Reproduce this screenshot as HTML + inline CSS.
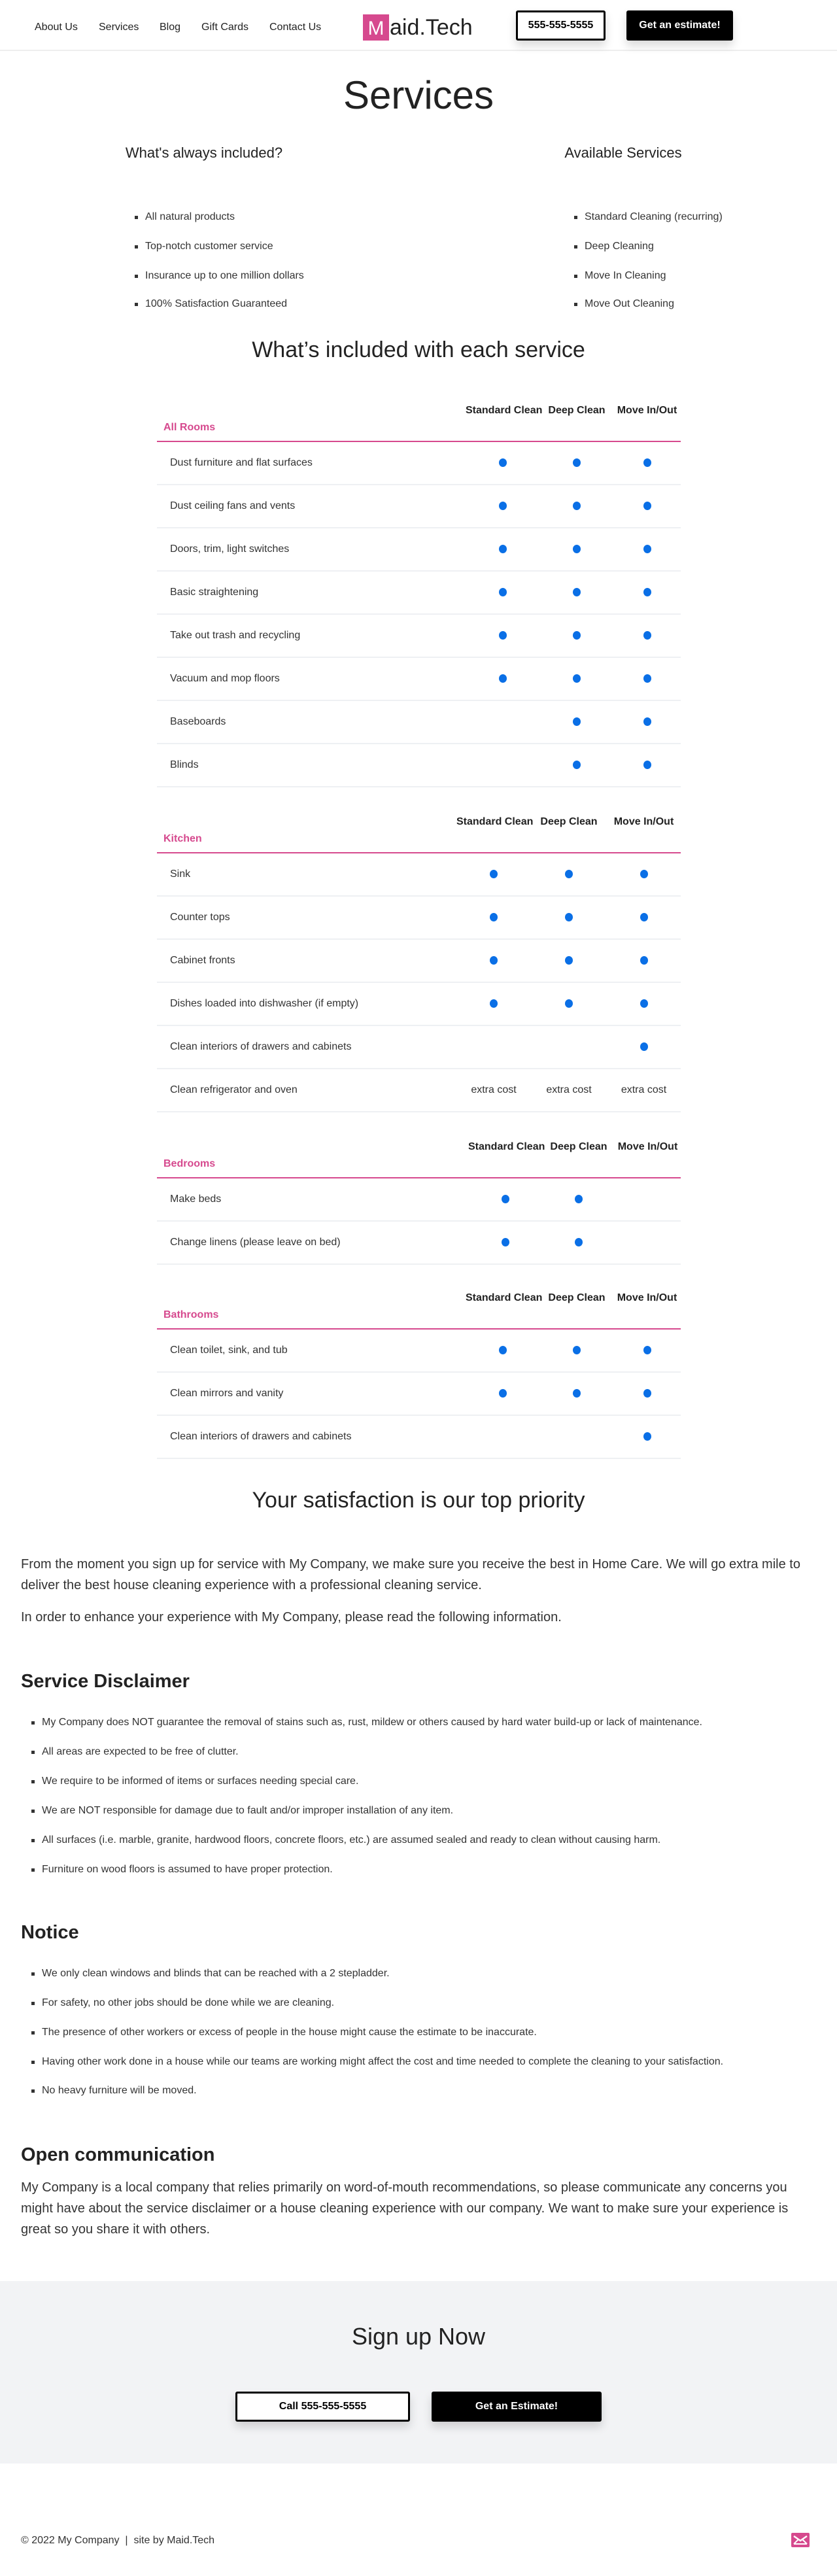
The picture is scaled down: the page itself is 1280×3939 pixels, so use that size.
<!DOCTYPE html>
<html><head><meta charset="utf-8"><style>
*{box-sizing:border-box;margin:0;padding:0}
body{width:1280px;height:3939px;position:relative;font-family:"Liberation Sans",Arial,sans-serif;color:#222;background:#fff;overflow:hidden}
.a{position:absolute}
.nav a{position:absolute;top:32px;font-size:16px;color:#222;text-decoration:none;line-height:20px}
.hdr{position:absolute;left:0;top:0;width:1280px;height:78px;border-bottom:2px solid #eee}
.btn{position:absolute;display:flex;align-items:center;justify-content:center;font-weight:bold;font-size:16px;border-radius:3px;box-shadow:0 8px 14px rgba(0,0,0,.15)}
.bw{background:#fff;border:3px solid #000;color:#000}
.bb{background:#000;color:#fff}
.ctr{position:absolute;left:0;width:1280px;text-align:center}
ul.l{position:absolute;list-style:none}
ul.l li{position:absolute;white-space:nowrap;font-size:16px;color:#333;line-height:20px;padding-left:16px}
ul.l li:before{content:"";position:absolute;left:0;top:8px;width:5px;height:5px;background:#333}
.tbl{position:absolute;left:240px;width:801px}
.th{position:relative;height:60px;border-bottom:2px solid #d6498e}
.th .c{position:absolute;top:0;line-height:24px;font-weight:bold;font-size:16px;color:#222;text-align:center;white-space:nowrap}
.th .cat{position:absolute;left:10px;top:26px;line-height:24px;font-size:16px;font-weight:bold;color:#d6498e}
.r{display:grid;height:66px;border-bottom:2px solid #eef0f3;align-items:center;font-size:16px;color:#333}
.r>div:first-child{padding-left:20px}
.r>div{text-align:center}
.r>div:first-child{text-align:left}
.d{display:inline-block;width:12px;height:13px;border-radius:50%;background:#0a6fe6;vertical-align:middle}
.p{position:absolute;left:32px;width:1220px;font-size:20px;line-height:32px;color:#333}
h3{position:absolute;left:32px;font-size:29px;font-weight:bold;color:#222;line-height:36px}
</style></head><body>
<div class="hdr"></div>
<div class="nav">
<a style="left:53px">About Us</a><a style="left:151px">Services</a><a style="left:244px">Blog</a><a style="left:308px">Gift Cards</a><a style="left:412px">Contact Us</a>
</div>
<div class="a" style="left:555px;top:22px;width:40px;height:40px;background:#d6498e;color:#fff;font-size:30px;line-height:44px;text-align:center">M</div>
<div class="a" style="left:596px;top:20px;font-size:34px;line-height:44px;color:#222">aid.Tech</div>
<div class="btn bw" style="left:789px;top:16px;width:137px;height:46px">555-555-5555</div>
<div class="btn bb" style="left:958px;top:16px;width:163px;height:46px">Get an estimate!</div>

<div class="ctr" style="top:110px;font-size:60px;line-height:72px">Services</div>
<div class="a" style="left:0;width:624px;text-align:center;top:220px;font-size:22px;line-height:28px">What's always included?</div>
<div class="a" style="left:640px;width:626px;text-align:center;top:220px;font-size:22px;line-height:28px">Available Services</div>
<ul class="l" style="left:206px;top:0">
<li style="top:322px">All natural products</li>
<li style="top:367px">Top-notch customer service</li>
<li style="top:412px">Insurance up to one million dollars</li>
<li style="top:455px">100% Satisfaction Guaranteed</li>
</ul>
<ul class="l" style="left:878px;top:0">
<li style="top:322px">Standard Cleaning (recurring)</li>
<li style="top:367px">Deep Cleaning</li>
<li style="top:412px">Move In Cleaning</li>
<li style="top:455px">Move Out Cleaning</li>
</ul>
<div class="ctr" style="top:513px;font-size:34px;line-height:44px">What’s included with each service</div>

<!-- T1 -->
<div class="tbl" style="top:616px">
<div class="th"><span class="c" style="left:472px;width:114px">Standard Clean</span><span class="c" style="left:586px;width:112px">Deep Clean</span><span class="c" style="left:698px;width:103px">Move In/Out</span><span class="cat">All Rooms</span></div>
<div class="r" style="grid-template-columns:472px 114px 112px 103px"><div>Dust furniture and flat surfaces</div><div><i class="d"></i></div><div><i class="d"></i></div><div><i class="d"></i></div></div>
<div class="r" style="grid-template-columns:472px 114px 112px 103px"><div>Dust ceiling fans and vents</div><div><i class="d"></i></div><div><i class="d"></i></div><div><i class="d"></i></div></div>
<div class="r" style="grid-template-columns:472px 114px 112px 103px"><div>Doors, trim, light switches</div><div><i class="d"></i></div><div><i class="d"></i></div><div><i class="d"></i></div></div>
<div class="r" style="grid-template-columns:472px 114px 112px 103px"><div>Basic straightening</div><div><i class="d"></i></div><div><i class="d"></i></div><div><i class="d"></i></div></div>
<div class="r" style="grid-template-columns:472px 114px 112px 103px"><div>Take out trash and recycling</div><div><i class="d"></i></div><div><i class="d"></i></div><div><i class="d"></i></div></div>
<div class="r" style="grid-template-columns:472px 114px 112px 103px"><div>Vacuum and mop floors</div><div><i class="d"></i></div><div><i class="d"></i></div><div><i class="d"></i></div></div>
<div class="r" style="grid-template-columns:472px 114px 112px 103px"><div>Baseboards</div><div></div><div><i class="d"></i></div><div><i class="d"></i></div></div>
<div class="r" style="grid-template-columns:472px 114px 112px 103px"><div>Blinds</div><div></div><div><i class="d"></i></div><div><i class="d"></i></div></div>
</div>

<!-- T2 -->
<div class="tbl" style="top:1245px">
<div class="th"><span class="c" style="left:458px;width:114px">Standard Clean</span><span class="c" style="left:572px;width:116px">Deep Clean</span><span class="c" style="left:688px;width:113px">Move In/Out</span><span class="cat">Kitchen</span></div>
<div class="r" style="grid-template-columns:458px 114px 116px 113px"><div>Sink</div><div><i class="d"></i></div><div><i class="d"></i></div><div><i class="d"></i></div></div>
<div class="r" style="grid-template-columns:458px 114px 116px 113px"><div>Counter tops</div><div><i class="d"></i></div><div><i class="d"></i></div><div><i class="d"></i></div></div>
<div class="r" style="grid-template-columns:458px 114px 116px 113px"><div>Cabinet fronts</div><div><i class="d"></i></div><div><i class="d"></i></div><div><i class="d"></i></div></div>
<div class="r" style="grid-template-columns:458px 114px 116px 113px"><div>Dishes loaded into dishwasher (if empty)</div><div><i class="d"></i></div><div><i class="d"></i></div><div><i class="d"></i></div></div>
<div class="r" style="grid-template-columns:458px 114px 116px 113px"><div>Clean interiors of drawers and cabinets</div><div></div><div></div><div><i class="d"></i></div></div>
<div class="r" style="grid-template-columns:458px 114px 116px 113px"><div>Clean refrigerator and oven</div><div>extra cost</div><div>extra cost</div><div>extra cost</div></div>
</div>

<!-- T3 -->
<div class="tbl" style="top:1742px">
<div class="th"><span class="c" style="left:476px;width:114px">Standard Clean</span><span class="c" style="left:590px;width:110px">Deep Clean</span><span class="c" style="left:700px;width:101px">Move In/Out</span><span class="cat">Bedrooms</span></div>
<div class="r" style="grid-template-columns:476px 114px 110px 101px"><div>Make beds</div><div><i class="d"></i></div><div><i class="d"></i></div><div></div></div>
<div class="r" style="grid-template-columns:476px 114px 110px 101px"><div>Change linens (please leave on bed)</div><div><i class="d"></i></div><div><i class="d"></i></div><div></div></div>
</div>

<!-- T4 -->
<div class="tbl" style="top:1973px">
<div class="th"><span class="c" style="left:472px;width:114px">Standard Clean</span><span class="c" style="left:586px;width:112px">Deep Clean</span><span class="c" style="left:698px;width:103px">Move In/Out</span><span class="cat">Bathrooms</span></div>
<div class="r" style="grid-template-columns:472px 114px 112px 103px"><div>Clean toilet, sink, and tub</div><div><i class="d"></i></div><div><i class="d"></i></div><div><i class="d"></i></div></div>
<div class="r" style="grid-template-columns:472px 114px 112px 103px"><div>Clean mirrors and vanity</div><div><i class="d"></i></div><div><i class="d"></i></div><div><i class="d"></i></div></div>
<div class="r" style="grid-template-columns:472px 114px 112px 103px"><div>Clean interiors of drawers and cabinets</div><div></div><div></div><div><i class="d"></i></div></div>
</div>

<div class="ctr" style="top:2272px;font-size:34px;line-height:44px">Your satisfaction is our top priority</div>
<div class="p" style="top:2376px">From the moment you sign up for service with My Company, we make sure you receive the best in Home Care. We will go extra mile to deliver the best house cleaning experience with a professional cleaning service.</div>
<div class="p" style="top:2457px">In order to enhance your experience with My Company, please read the following information.</div>

<h3 style="top:2553px">Service Disclaimer</h3>
<ul class="l" style="left:48px;top:0">
<li style="top:2624px">My Company does NOT guarantee the removal of stains such as, rust, mildew or others caused by hard water build-up or lack of maintenance.</li>
<li style="top:2669px">All areas are expected to be free of clutter.</li>
<li style="top:2714px">We require to be informed of items or surfaces needing special care.</li>
<li style="top:2759px">We are NOT responsible for damage due to fault and/or improper installation of any item.</li>
<li style="top:2804px">All surfaces (i.e. marble, granite, hardwood floors, concrete floors, etc.) are assumed sealed and ready to clean without causing harm.</li>
<li style="top:2849px">Furniture on wood floors is assumed to have proper protection.</li>
</ul>

<h3 style="top:2937px">Notice</h3>
<ul class="l" style="left:48px;top:0">
<li style="top:3008px">We only clean windows and blinds that can be reached with a 2 stepladder.</li>
<li style="top:3053px">For safety, no other jobs should be done while we are cleaning.</li>
<li style="top:3098px">The presence of other workers or excess of people in the house might cause the estimate to be inaccurate.</li>
<li style="top:3143px">Having other work done in a house while our teams are working might affect the cost and time needed to complete the cleaning to your satisfaction.</li>
<li style="top:3187px">No heavy furniture will be moved.</li>
</ul>

<h3 style="top:3277px">Open communication</h3>
<div class="p" style="top:3329px;width:1200px">My Company is a local company that relies primarily on word-of-mouth recommendations, so please communicate any concerns you might have about the service disclaimer or a house cleaning experience with our company. We want to make sure your experience is great so you share it with others.</div>

<div class="a" style="left:0;top:3488px;width:1280px;height:279px;background:#f2f3f5"></div>
<div class="ctr" style="top:3551px;font-size:36px;line-height:44px">Sign up Now</div>
<div class="btn bw" style="left:360px;top:3657px;width:267px;height:46px">Call 555-555-5555</div>
<div class="btn bb" style="left:660px;top:3657px;width:260px;height:46px">Get an Estimate!</div>

<div class="a" style="left:32px;top:3875px;font-size:16px;line-height:20px;color:#333">© 2022 My Company &nbsp;|&nbsp; site by Maid.Tech</div>
<svg class="a" style="left:1210px;top:3873px" width="28" height="22" viewBox="0 0 28 22"><rect width="28" height="22" rx="2" fill="#d6498e"/><path d="M4 5 L14 12 L24 5" stroke="#fff" stroke-width="2.5" fill="none"/><path d="M4 17 L11 10 M24 17 L17 10" stroke="#fff" stroke-width="2" fill="none"/><rect x="4" y="16" width="20" height="2" fill="#fff"/></svg>
</body></html>
